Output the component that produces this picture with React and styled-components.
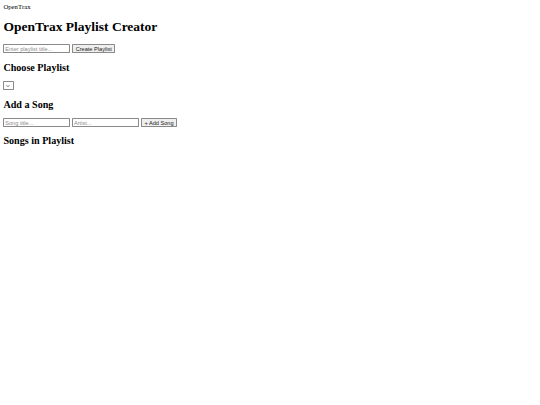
import React, { useState } from 'react';
import styled, { createGlobalStyle } from 'styled-components';

// the shot is a 1280x960 page shrunk to 540x405, so every size goes through s()
const SCALE = 540 / 1280;
const s = (n) => `${(n * SCALE).toFixed(3)}px`;

const GlobalStyle = createGlobalStyle`
  html, body {
    background: #fff;
  }
  body {
    margin: ${s(8)};
    font-family: "Liberation Serif", "Times New Roman", serif;
    font-size: ${s(16)};
    line-height: normal;
    color: #000;
  }
`;

const Brand = styled.nav`
  font-size: ${s(16)};
`;

const Title = styled.h1`
  font-size: ${s(32)};
  font-weight: bold;
  margin: ${s(21.44)} 0;
`;

const Heading = styled.h2`
  font-size: ${s(24)};
  font-weight: bold;
  margin: ${s(19.92)} 0;
`;

const Row = styled.div`
  display: flex;
  align-items: center;
  gap: ${s(4)};
  min-height: ${({ $tall }) => ($tall ? s(22) : s(21))};
`;

const TextInput = styled.input`
  box-sizing: border-box;
  width: ${s(159)};
  height: ${s(21)};
  padding: ${s(1)} ${s(2)};
  border: 1px solid #8a8a8a;
  border-radius: ${s(2)};
  font-family: "Liberation Sans", Arial, sans-serif;
  font-size: ${s(13.33)};
  background: #fff;
  outline: none;

  &::placeholder {
    color: #8c8c8c;
  }
`;

const Button = styled.button`
  box-sizing: border-box;
  height: ${s(21)};
  padding: ${s(1)} ${s(6)};
  border: 1px solid #8a8a8a;
  border-radius: ${s(2)};
  background: #efefef;
  font-family: "Liberation Sans", Arial, sans-serif;
  font-size: ${s(13.33)};
  color: #1a1a1a;
  cursor: pointer;
`;

const PickerWrap = styled.span`
  position: relative;
  display: inline-block;
`;

const Picker = styled.select`
  display: block;
  appearance: none;
  box-sizing: border-box;
  width: ${s(24)};
  height: ${s(20)};
  padding: 0;
  border: 1px solid #8a8a8a;
  border-radius: ${s(2)};
  background: #fff;
  font-size: ${s(13.33)};
  color: transparent;
`;

const Chevron = styled.svg`
  position: absolute;
  left: 50%;
  top: 50%;
  width: ${s(10)};
  height: ${s(10)};
  transform: translate(-50%, -50%);
  pointer-events: none;
`;

const SongList = styled.ul`
  margin: ${s(16)} 0;
  padding-left: ${s(40)};
`;

export default function App() {
  const [playlists, setPlaylists] = useState([]);
  const [current, setCurrent] = useState('');
  const [newTitle, setNewTitle] = useState('');
  const [song, setSong] = useState('');
  const [artist, setArtist] = useState('');

  const createPlaylist = () => {
    if (!newTitle.trim()) return;
    const p = { title: newTitle.trim(), songs: [] };
    setPlaylists([...playlists, p]);
    setCurrent(p.title);
    setNewTitle('');
  };

  const addSong = () => {
    if (!current || !song.trim()) return;
    setPlaylists(playlists.map(p =>
      p.title === current ? { ...p, songs: [...p.songs, { title: song, artist }] } : p
    ));
    setSong('');
    setArtist('');
  };

  const active = playlists.find(p => p.title === current);

  return (
    <>
      <GlobalStyle />
      <Brand>OpenTrax</Brand>
      <Title>OpenTrax Playlist Creator</Title>
      <Row>
        <TextInput
          value={newTitle}
          onChange={e => setNewTitle(e.target.value)}
          placeholder="Enter playlist title..."
        />
        <Button onClick={createPlaylist}>Create Playlist</Button>
      </Row>

      <Heading>Choose Playlist</Heading>
      <Row $tall>
        <PickerWrap>
          <Picker value={current} onChange={e => setCurrent(e.target.value)}>
            {playlists.map(p => (
              <option key={p.title} value={p.title}>{p.title}</option>
            ))}
          </Picker>
          <Chevron viewBox="0 0 10 10">
            <path d="M2 3.5 L5 6.5 L8 3.5" fill="none" stroke="#222" strokeWidth="1.8" />
          </Chevron>
        </PickerWrap>
      </Row>

      <Heading>Add a Song</Heading>
      <Row>
        <TextInput value={song} onChange={e => setSong(e.target.value)} placeholder="Song title..." />
        <TextInput value={artist} onChange={e => setArtist(e.target.value)} placeholder="Artist..." />
        <Button onClick={addSong}>+ Add Song</Button>
      </Row>

      <Heading>Songs in Playlist</Heading>
      <SongList>
        {active && active.songs.map((x, i) => (
          <li key={i}>{x.title} — {x.artist}</li>
        ))}
      </SongList>
    </>
  );
}
